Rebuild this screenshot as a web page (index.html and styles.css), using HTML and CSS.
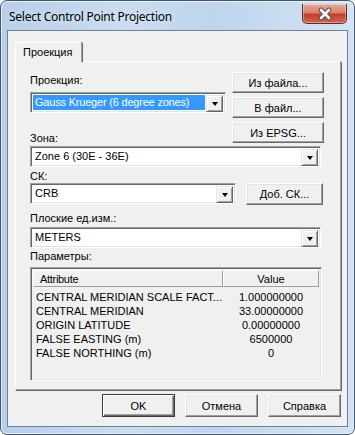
FILE: index.html
```html
<!DOCTYPE html>
<html lang="ru">
<head>
<meta charset="UTF-8" />
<title>Select Control Point Projection</title>
<link rel="stylesheet" href="styles.css">
</head>
<body>

<div class="window">
  <div class="titlebar">
    <span class="caption">Select Control Point Projection</span>
    <div class="close">
      <svg width="18" height="14" viewBox="0 0 18 14">
        <path d="M5 3 L13 11 M13 3 L5 11" stroke="#4a4f57" stroke-width="4.6" stroke-linecap="round" fill="none"/>
        <path d="M5 3 L13 11 M13 3 L5 11" stroke="#fff" stroke-width="2.6" stroke-linecap="round" fill="none"/>
      </svg>
    </div>
  </div>

  <div class="client">
    <div class="tabs">
      <div class="tab">Проекция</div>
    </div>

    <div class="panel">
      <div class="top">
        <div class="col">
          <div class="lbl first">Проекция:</div>
          <div class="combo short">
            <span class="val sel">Gauss Krueger (6 degree zones)</span>
            <span class="drop"><i></i></span>
          </div>
          <div class="lbl zone">Зона:</div>
        </div>
        <div class="side">
          <button class="btn">Из файла...</button>
          <button class="btn">В файл...</button>
          <button class="btn">Из EPSG...</button>
        </div>
      </div>

      <div class="combo wide gap1">
        <span class="val">Zone 6 (30E - 36E)</span>
        <span class="drop"><i></i></span>
      </div>

      <div class="lbl ck">СК:</div>
      <div class="row">
        <div class="combo mid">
          <span class="val">CRB</span>
          <span class="drop"><i></i></span>
        </div>
        <button class="btn add">Доб. СК...</button>
      </div>

      <div class="lbl units">Плоские ед.изм.:</div>
      <div class="combo wide gap2">
        <span class="val">METERS</span>
        <span class="drop"><i></i></span>
      </div>

      <div class="lbl params">Параметры:</div>
      <div class="list">
        <div class="head">
          <div class="hcell attr">Attribute</div>
          <div class="hcell value">Value</div>
        </div>
        <div class="rows">
          <div class="item"><span>CENTRAL MERIDIAN SCALE FACT...</span><span>1.000000000</span></div>
          <div class="item"><span>CENTRAL MERIDIAN</span><span>33.00000000</span></div>
          <div class="item"><span>ORIGIN LATITUDE</span><span>0.00000000</span></div>
          <div class="item"><span>FALSE EASTING (m)</span><span>6500000</span></div>
          <div class="item"><span>FALSE NORTHING (m)</span><span>0</span></div>
        </div>
      </div>
    </div>

    <div class="footer">
      <button class="btn big default">OK</button>
      <button class="btn big">Отмена</button>
      <button class="btn big">Справка</button>
    </div>
  </div>
</div>

</body>
</html>
```

FILE: styles.css
```css
body { margin:0; background:#fff; font-family:"Liberation Sans", Arial, sans-serif; font-size:11px; color:#000; }

.window {
  width:355px; height:435px; box-sizing:border-box;
  border:1px solid #45566a; border-radius:7px;
  background:linear-gradient(to right, #b7cfe9 0%, #c9dcf0 35%, #bfd5ec 60%, #d3e3f3 100%);
  display:flex; flex-direction:column;
  box-shadow:inset 0 0 0 1px #e6f0fa;
}

.titlebar { height:29px; display:flex; align-items:flex-start; }
.caption {
  font-family:"Noto Sans", "Open Sans", sans-serif; font-size:12px; line-height:16px;
  letter-spacing:-0.25px;
  margin:8px 0 0 8px; color:#000; text-shadow:0 0 6px #e8f1fb;
}
.close {
  margin:3px 7px 0 auto; width:43px; height:19px;
  border:1px solid #5a2d28; border-top:none; border-radius:0 0 5px 5px;
  background:linear-gradient(#e9a99b 0%, #d9806b 45%, #c2412a 55%, #d4654c 100%);
  display:flex; justify-content:center; align-items:center;
  box-shadow:inset 0 0 0 1px rgba(255,255,255,0.35);
}

.client {
  flex:1; margin:0 6px 7px 6px;
  border:1px solid #6f8197; background:#f0f0f0;
  padding:11px 0 0 7px;
  display:flex; flex-direction:column;
}

.tabs { height:19px; display:flex; position:relative; z-index:1; }
.tab {
  height:19px; padding:0 7px; width:51px;
  background:#f0f0f0; line-height:18px;
  border-top:1px solid #fff; border-left:1px solid #fff; border-right:1px solid #a0a0a0;
  box-shadow:1px 0 0 #696969;
  border-radius:2px 2px 0 0;
}

.panel {
  width:326px; box-sizing:border-box;
  border-top:1px solid #fff; border-left:1px solid #fff;
  border-right:1px solid #a0a0a0; border-bottom:1px solid #a0a0a0;
  box-shadow:1px 1px 0 #696969;
  padding:10px 0 8px 14px;
}

.lbl { line-height:13px; height:13px; white-space:nowrap; }
.first { margin-top:2px; }
.zone { margin-top:19px; }
.ck { margin-top:3px; }
.units { margin-top:7px; }
.params { margin-top:2px; }

.top { display:grid; grid-template-columns:196px 92px; column-gap:6px; }
.col .combo { margin-top:5px; }
.side { display:flex; flex-direction:column; gap:4px; }

.btn {
  font-family:"Liberation Sans", Arial, sans-serif; font-size:11px; color:#000;
  background:#f0f0f0; padding:0; margin:0;
  border-top:1px solid #fff; border-left:1px solid #fff;
  border-right:1px solid #696969; border-bottom:1px solid #696969;
  box-shadow:inset -1px -1px 0 #a0a0a0, inset 1px 1px 0 #e3e3e3;
  height:21px; width:92px;
}

.combo {
  height:21px; box-sizing:border-box; background:#fff;
  border-top:1px solid #a0a0a0; border-left:1px solid #a0a0a0;
  border-right:1px solid #fff; border-bottom:1px solid #fff;
  box-shadow:inset 1px 1px 0 #696969, inset -1px -1px 0 #e3e3e3;
  padding:2px; display:flex;
}
.combo.short { width:196px; }
.combo.wide { width:291px; }
.combo.mid { width:206px; }
.gap1 { margin-top:1px; }
.gap2 { margin-top:2px; }

.val { flex:1; line-height:15px; padding-left:2px; white-space:nowrap; overflow:hidden; }
.val.sel { background:#3399ff; color:#fff; margin-right:1px; letter-spacing:-0.2px; }
.drop {
  width:17px; height:17px; box-sizing:border-box; background:#f0f0f0;
  border-top:1px solid #e3e3e3; border-left:1px solid #e3e3e3;
  border-right:1px solid #696969; border-bottom:1px solid #696969;
  box-shadow:inset 1px 1px 0 #fff, inset -1px -1px 0 #a0a0a0;
  display:flex; justify-content:center; align-items:center;
}
.drop i {
  width:0; height:0; margin-top:1px;
  border-left:3.5px solid transparent; border-right:3.5px solid transparent;
  border-top:4px solid #000;
}

.row { display:flex; gap:10px; align-items:flex-start; }
.btn.add { width:77px; height:22px; }

.list {
  margin-top:4px; width:292px; height:114px; box-sizing:border-box;
  border-top:1px solid #a0a0a0; border-left:1px solid #a0a0a0;
  border-right:1px solid #fff; border-bottom:1px solid #fff;
  box-shadow:inset 1px 1px 0 #696969, inset -1px -1px 0 #e3e3e3;
  padding:2px; background:#f0f0f0;
}
.head { display:flex; height:17px; }
.hcell {
  box-sizing:border-box; height:17px; line-height:16px; background:#f0f0f0;
  border-top:1px solid #fff; border-left:1px solid #fff;
  border-right:1px solid #a0a0a0; border-bottom:1px solid #a0a0a0;
}
.attr { width:190px; padding-left:6px; letter-spacing:-0.3px; }
.value { flex:1; text-align:center; }
.rows { padding-top:3px; }
.item { display:grid; grid-template-columns:190px 1fr; height:14px; line-height:14px; }
.item span:first-child { padding-left:3px; white-space:nowrap; }
.item span:last-child { text-align:center; }

.footer { display:flex; justify-content:flex-end; gap:10px; margin-top:4px; padding-right:6px; }
.btn.big { width:73px; height:23px; }
.btn.default { border:1px solid #3c3c3c; box-shadow:inset 1px 1px 0 #fff, inset -1px -1px 0 #696969, inset -2px -2px 0 #a0a0a0; }
```
